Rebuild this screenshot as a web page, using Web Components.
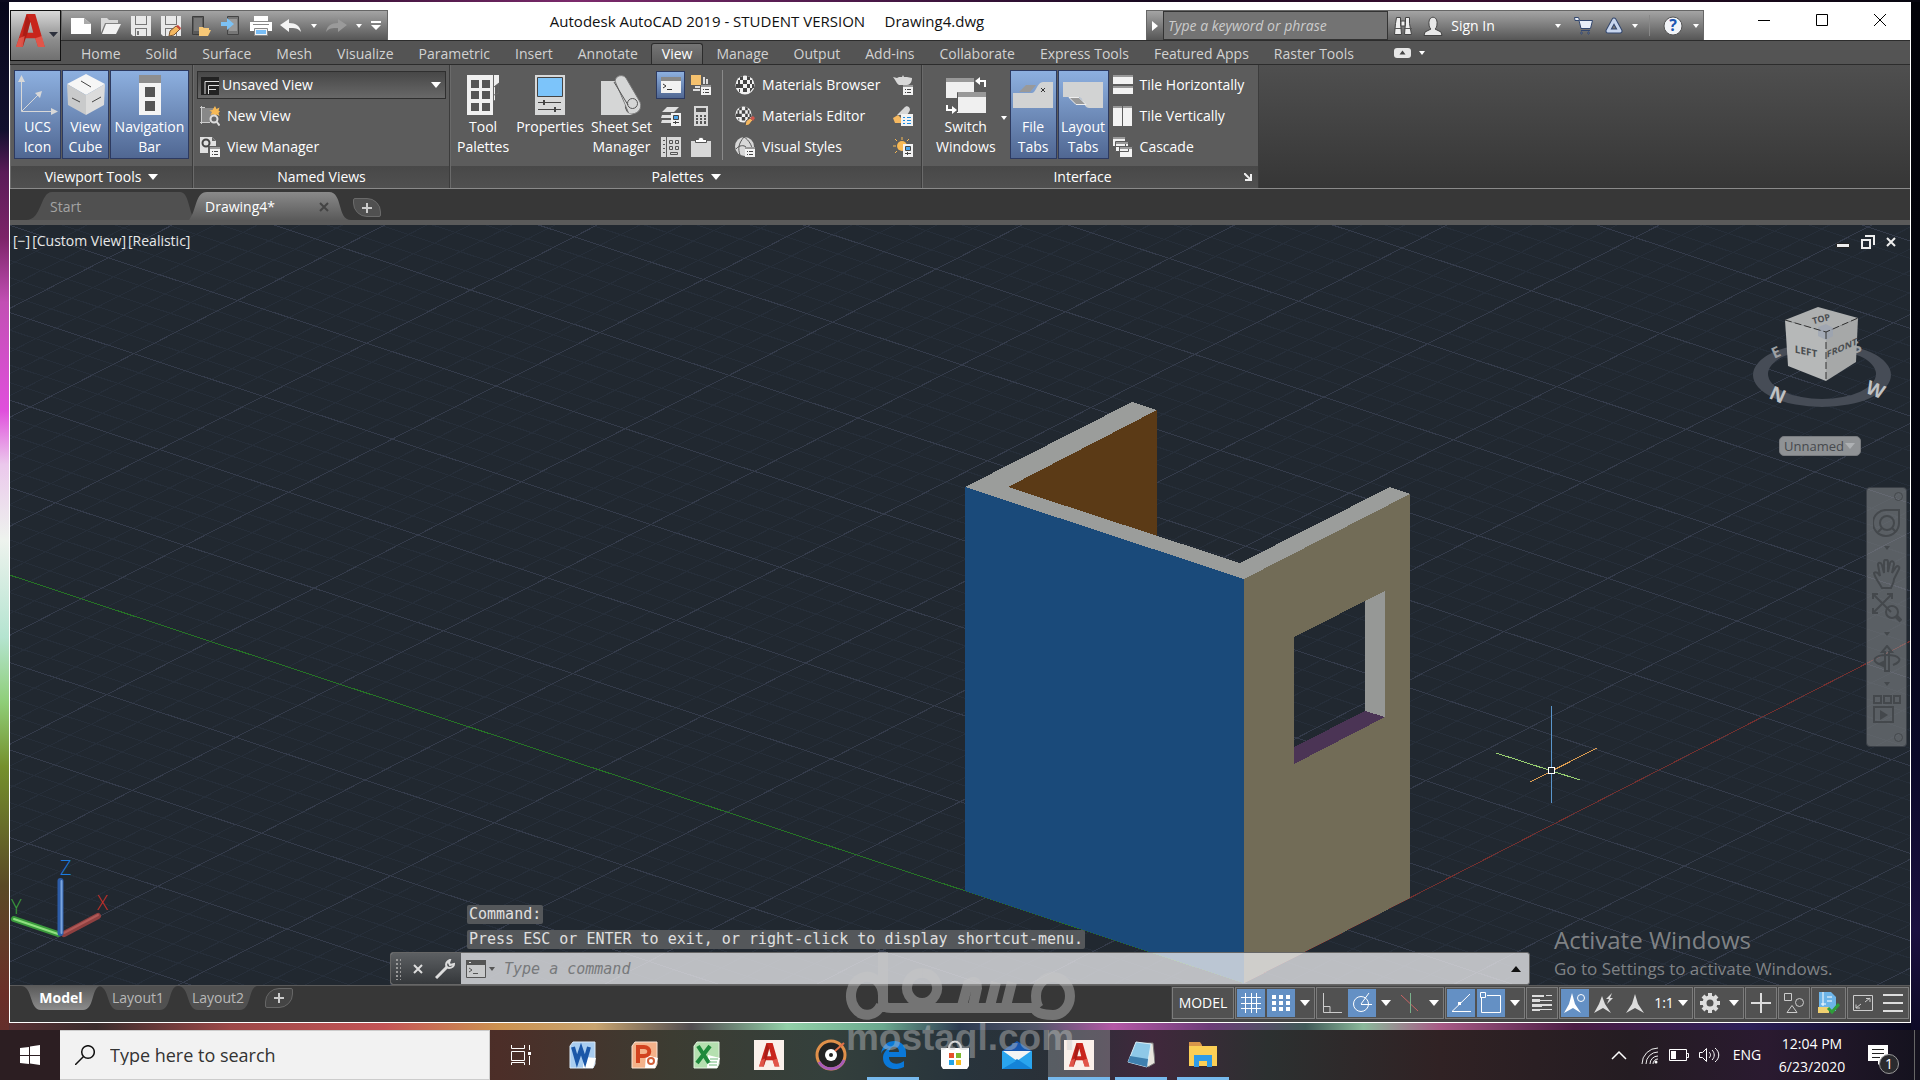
<!DOCTYPE html>
<html lang="en">
<head>
<meta charset="utf-8">
<title>Autodesk AutoCAD 2019</title>
<style>
  html, body { height: 100%; margin: 0; }
  body {
    font: 14px/20px "Open Sans", "Noto Sans", sans-serif;
    overflow: hidden;
  }
</style>
</head>
<body>
<desk-top>
  <cad-window></cad-window>
  <win-taskbar slot="taskbar"></win-taskbar>
</desk-top>

<script>
const base = /* css */ `
  :host { display: block; box-sizing: border-box; }
  * { box-sizing: border-box; margin: 0; }
  button, select, input { font: inherit; color: inherit; background: none; border: 0; padding: 0; outline: 0; }
  button { display: flex; align-items: center; justify-content: center; white-space: nowrap; }
  svg { display: block; }
`

// Most elements are only a template, so they share one factory
function define(name, css, html, setup) {
  const template = document.createElement("template")
  template.innerHTML = `<style>${base}${css}</style>${html}`
  customElements.define(name, class extends HTMLElement {
    constructor() {
      super()
      this.attachShadow({ mode: "open" }).append(template.content.cloneNode(true))
    }
    connectedCallback() {
      if (setup) setup(this, this.shadowRoot)
    }
  })
}

// name: [width, height, markup]
const listBadge = `<path fill="#f2f2f2" d="M10 10h10v10H10z"/><path fill="#999" d="M10 10h10v2H10z"/><path stroke="#444" d="M12 14.500h1M14 14.500h4M12 17.500h1M14 17.500h4"/>`
const propBadge = `<path fill="#f2f2f2" d="M10 7h10v13H10z"/><path fill="#4aa3e8" stroke="#444" d="M12.500 9.500h5v4h-5z"/><path stroke="#444" d="M12 16.500h6M14.500 15v3"/>`
const checker = `<circle cx="10" cy="10" r="9.500" fill="#f2f2f2"/><path fill="#444" d="M5 2l3-1v4H5zM12 1l3 1v3h-3zM8 5h4v4H8zM1 9h4v4H1zM3 5h2v4H3zM15 5h2v4h-2zM5 9h3v4H5zM12 9h3v4h-3zM8 13h4v4H8zM17 9h2v4h-2zM4 14h1v3H4zM15 13h3l-3 4z"/>`
const redA = `<path fill="#c8251c" d="M0 30L11 0h9l10 30h-7l-3-8H10l-3 8zM12 17h6L15 7z"/><path fill="#8e1510" d="M11 0l4 7-3 10-5 13-2 0z" opacity=".5"/><path fill="#ec6a5c" d="M0 30l3-8 6-2-2 10zM23 30l-3-8 7-2 3 10z" opacity=".7"/>`

const icons = {
  caret: [10, 6, `<path fill="currentColor" d="M0 0h10L5 6z"/>`],
  caretS: [6, 4, `<path fill="currentColor" d="M0 0h6L3 4z"/>`],
  logo: [43, 34, `<g transform="scale(.96 1.1)">${redA}</g><path fill="#2c303c" d="M33 18h9l-4.500 5z"/>`],
  fileNew: [20, 16, `<path fill="#fff" d="M0 0h13l7 6v10H0z"/><path fill="#aaa" d="M13 0v6h7z"/>`],
  fileOpen: [20, 16, `<path fill="#d8d8d8" d="M0 0h6l2 2h9v3H4L0 15z"/><path fill="#f2f2f2" d="M5 6h15l-5 10H1z"/>`],
  save: [20, 20, `<path fill="#e8e8e8" d="M0 0h20v20H2l-2-2z"/><path fill="#777" d="M4 0h1v8h10V0h1v9H4zM4 12h12v8h-1v-7H5v7H4z"/><path fill="#777" d="M6 15h2v4H6z"/>`],
  saveAs: [20, 20, `<path fill="#e8e8e8" d="M0 0h20v20H2l-2-2z"/><path fill="#777" d="M4 0h1v8h10V0h1v9H4zM4 12h12v8h-1v-7H5v7H4z"/><path fill="#f5b860" stroke="#7a5430" d="M8 20l1-5 6-5 4 3-6 6z"/><path fill="#c8443a" d="M15 10l2-1 3 3-1 2z"/>`],
  openWeb: [20, 20, `<path fill="#5a5a5a" stroke="#3c3c3c" d="M1.500.5h11v18h-11z"/><path fill="#777" d="M3 2h8v13H3z"/><path fill="#f7c877" d="M8 11h4l1 1h5v2h2l-3 6H8z"/>`],
  saveWeb: [20, 20, `<path fill="#777" stroke="#444" d="M6.500.5h11v18h-11z"/><path fill="#9a9a9a" d="M8 3h8v12H8z"/><path fill="#7cc2f5" d="M0 6h6V2l7 6-7 6v-4H0z"/>`],
  print: [22, 20, `<path fill="#fff" d="M4 0h14v5H4zM0 6h22v9H0z"/><path fill="#888" d="M3 8h16v1H3z"/><path fill="#f5f5f5" stroke="#888" d="M4.500 12.500h13v7h-13z"/><path fill="#78bdf5" d="M6 14h10v4H6z"/>`],
  undo: [22, 14, `<path fill="#f4f4f4" d="M0 6l9-6v4c7 0 11 3 12 9-3-4-6-4-12-4v4z"/>`],
  redo: [22, 14, `<path fill="#9a9a9a" d="M22 6l-9-6v4C6 4 2 7 1 13c3-4 6-4 12-4v4z"/>`],
  more: [10, 9, `<path fill="#fff" d="M0 0h10v2H0zM0 4h10L5 9z"/>`],
  play: [6, 10, `<path fill="#fff" d="M0 0l6 5-6 5z"/>`],
  binoculars: [20, 20, `<g fill="#eee" stroke="#444"><path d="M3.500 1.500h4v5l1 12h-7l1-11zM12.500 1.500h4v6l2 11h-7l1-12z"/><path d="M8 5h4v5H8z"/></g><path stroke="#555" d="M2 12.500h7M11 12.500h8"/>`],
  user: [20, 20, `<path fill="#e8e8e8" stroke="#444" d="M6 8c-1-9 9-9 8 0 0 3-1 4-2 5l6 3 1 3.500H1L2 16l6-3c-1-1-2-2-2-5z"/>`],
  cart: [20, 18, `<path fill="#e8eef8" stroke="#33476e" d="M.5.5h4l1 3h13l-2 8H7l-2-8H1zM7 15h1v2H7zM14 15h1v2h-1z"/><path stroke="#33476e" d="M7 13.500h9"/>`],
  a360: [20, 19, `<path fill="none" stroke="#33476e" stroke-width="5" stroke-linejoin="round" d="M10 4l6 11H4z"/><path fill="none" stroke="#c8d6ee" stroke-width="3" stroke-linejoin="round" d="M10 4l6 11H4z"/>`],
  help: [20, 20, `<circle cx="10" cy="10" r="9" fill="#f2f4f8" stroke="#555"/>`],
  winMin: [12, 12, `<path fill="#000" d="M0 6h12v1H0z"/>`],
  winMax: [12, 12, `<path fill="none" stroke="#000" d="M.5.5h11v11H.5z"/>`],
  winClose: [12, 12, `<path stroke="#000" d="M0 0l12 12M12 0L0 12"/>`],
  ribbonMin: [17, 10, `<rect width="17" height="10" rx="3" fill="#e6e6e6"/><path fill="#444" d="M8.500 2.500l3 4h-6z"/>`],
  ucs: [40, 40, `<g fill="none" stroke="#d8d8d8"><path d="M3.500 4v32.500H34M4 36l16-16"/></g><path fill="#d8d8d8" d="M3.500 0L7 7H0zM40 36.500l-7 3.500v-7zM24 16l-2 7-5-5z"/>`],
  cube: [40, 42, `<path fill="#f6f6f6" d="M20 0l19 10-19 11L1 10z"/><path fill="#c9cacb" d="M1 10l19 11v20L2 31z"/><path fill="#dcdcdc" d="M39 10L20 21v20l18-10z"/><path stroke="#444" d="M15 7l10 6M6 24l8 4M26 28l9-5"/>`],
  navBar: [22, 40, `<path fill="#8e8e8e" d="M0 0h22v8H0z"/><path fill="#f4f4f4" d="M0 8h22v32H0z"/><path fill="#555" d="M6 12h10v10H6zM6 26h10v10H6z"/>`],
  viewPic: [20, 20, `<path fill="#222" d="M1 1h18v18H1z"/><path fill="none" stroke="#ddd" d="M5 18V5.500h14M8.500 18V9.500H19M8 13.500h8"/>`],
  newView: [20, 20, `<path fill="#888" d="M2 2h12v14H2z"/><path fill="none" stroke="#ccc" d="M1.500 0v18M0 16.500h10M0 1.500h5"/><path fill="#f7b955" d="M15 0l1.500 3 3-1.500-1 3 1.500 1-1.500 1.500 1 3-3-1.500L15 11l-1.500-3-3 1 1.500-3L9.500 4.500l3-.500z"/><circle cx="14" cy="13" r="3.500" fill="#666" stroke="#ddd" stroke-width="2"/><path stroke="#ddd" stroke-width="2" d="M16.500 15.500l3 4"/>`],
  viewMgr: [20, 20, `<path fill="#e0e0e0" d="M0 0h12l4 4v5H8v7H0z"/><circle cx="6" cy="6" r="3.500" fill="none" stroke="#444" stroke-width="2"/><path fill="#666" d="M12 0v4h4z"/>${listBadge}`],
  toolPal: [32, 40, `<path fill="#f0f0f0" d="M0 0h32v8l-4 3v14l-2 1v14H0z"/><g fill="#555"><path d="M4 5h8v8H4zM15 5h8v8h-8zM4 16h8v8H4zM15 16h8v8h-8zM4 28h8v8H4zM15 28h8v8h-8z"/></g><path stroke="#666" fill="none" d="M26.500 0v26M27 12l5-4v10l-5 2"/>`],
  props: [30, 40, `<path fill="#d8d9d9" d="M0 0h30v40H0z"/><path fill="#7cc4fa" stroke="#444" d="M2.500 2.500h25v19h-25z"/><path fill="none" stroke="#444" d="M3 27.500h23M3 34.500h23"/><path stroke="#444" stroke-width="2" d="M9 25v5M20 32v5"/>`],
  sheetSet: [40, 40, `<path fill="#d5d6d6" d="M0 6h16l10 34H0z"/><path fill="#d5d6d6" stroke="#777" d="M14 6c1-6 8-7 11-3l14 24c3 7-3 13-11 12z"/><path fill="#d5d6d6" d="M0 40h32c-5-1-9-5-8-10L13 7H0z"/><circle cx="31.500" cy="28.500" r="5" fill="none" stroke="#555"/><path fill="none" stroke="#555" d="M13 7l14 23"/>`],
  cmd: [20, 16, `<path fill="#f2f2f2" d="M0 0h20v16H0z"/><path fill="#888" d="M0 0h20v4H0z"/><path fill="none" stroke="#333" d="M2 7l3 2-3 2M6 12.500h5"/>`],
  cmdDark: [20, 18, `<path fill="#c8c9ca" stroke="#555" d="M.5.5h19v17H.5z"/><path fill="#555" d="M0 0h20v5H0z"/><path fill="none" stroke="#555" d="M3 8l3 2-3 2M7 13.500h5"/><path stroke="#ddd" d="M3 2.500h2"/>`],
  design: [20, 20, `<path fill="#f5c16e" d="M0 0h10v10H0z"/><path fill="#ddd" d="M12 2h2v7h-2zM15 4h2v5h-2zM4 11h5v2H4zM2 14h7v2H2z"/>${listBadge}`],
  layers: [20, 20, `<path fill="#e0e0e0" d="M6 1h12l-5 5H1zM1 9h9v3H0zM1 14h9v3H0z"/>${propBadge}`],
  calc: [16, 20, `<path fill="#d8d8d8" d="M1 0h14v20H1z"/><path fill="#555" d="M3 2h10v4H3zM3 9h2v2H3zM7 9h2v2H7zM11 9h2v2h-2zM3 12h2v2H3zM7 12h2v2H7zM11 12h2v2h-2zM3 15h2v3H3zM7 15h2v3H7zM11 15h2v3h-2z"/>`],
  sheet: [20, 20, `<path fill="#d8d8d8" d="M0 0h5v20H0zM6 0h14v20H6z"/><path fill="none" stroke="#555" d="M8.500 3.500h3v3h-3zM14.500 3.500h3v3h-3zM8.500 9.500h3v3h-3zM14.500 9.500h3v3h-3zM9.500 15.500h7v2h-7z"/><path fill="#555" d="M2 3h2v1H2zM2 7h2v1H2zM2 11h2v1H2zM2 15h2v1H2z"/>`],
  clip: [20, 20, `<path fill="#d8d8d8" d="M0 4h20v16H0z"/><path fill="#fff" stroke="#555" d="M4.500 5.500V2.500h3c0-3 5-3 5 0h3v3z"/>`],
  matBrowser: [20, 20, checker],
  matEditor: [20, 20, `<g transform="scale(.85)">${checker}</g><path fill="#f5b860" stroke="#555" d="M10 20l1-5 4-3 3 2-4 5z"/><path fill="#d0574c" d="M15 12l3-2 2 2-2 3z"/>`],
  visual: [20, 20, `<circle cx="9.500" cy="9.500" r="9.500" fill="#d8d8d8"/><path fill="none" stroke="#555" d="M9 0C3 7 3 12 5 18M9 0c5 3 8 9 8 12M1 12c3-4 8-4 10-2"/>${listBadge}`],
  teapot: [20, 20, `<path fill="#d8d8d8" d="M0 2l4 1 2-1h3l1-2 1 2h3l5 1c0 4-2 7-5 7H6C4 9 3 6 0 2z"/>${listBadge}`],
  matAttach: [20, 20, `<path fill="#d8d8d8" d="M4 9l7-7c3-4 8 0 5 4l-2 3H8z"/><path fill="#f5b860" d="M0 12l5-3 5 5-2 3H2z"/><path fill="#f2f2f2" d="M8 8h12v12H8z"/><path fill="none" stroke="#1d8ce0" d="M10 11.500h2M14 11.500h4M10 14.500h2M14 14.500h4M10 17.500h2M14 17.500h4"/>`],
  sun: [20, 20, `<circle cx="9" cy="9" r="5" fill="#f7b955"/><path stroke="#f7b955" d="M9 0v3M2 2l2 2M0 9h3M2 16l2-2M16 2l-2 2"/>${propBadge}`],
  switchWin: [40, 40, `<path fill="#f0f0f0" d="M0 3h28v20H0zM11 18h29v20H11z"/><path fill="#999" d="M0 3h28v4H0zM11 17h29v5H11z"/><path fill="none" stroke="#555" d="M11.500 37V17.500"/><path fill="none" stroke="#fff" stroke-width="2" d="M32 6h7v6M1 30v5h7"/><path fill="#fff" d="M34 2v8l-5-4zM6 31v8l5-4z"/>`],
  fileTabs: [40, 26, `<path fill="#d2d3d3" d="M0 11h19c4 0 5-11 11-11h10v26H0z"/><path fill="#999" d="M6 10l7-7h10l-6 7z"/><path stroke="#333" d="M28 6l4 4M32 6l-4 4"/>`],
  layoutTabs: [40, 26, `<path fill="#d2d3d3" d="M0 0h40v26H26c-6 0-5-11-11-11H0z"/><path fill="#999" stroke="#eee" d="M6 15.500h10l7 7H13z"/>`],
  tileH: [20, 20, `<path fill="#f2f2f2" d="M0 0h20v9H0zM0 11h20v8H0z"/><path fill="#999" d="M0 0h20v2H0zM0 11h20v2H0z"/>`],
  tileV: [20, 20, `<path fill="#f2f2f2" d="M0 0h9v20H0zM10 0h9v20h-9z"/><path fill="#999" d="M0 0h9v2H0zM10 0h9v2h-9z"/>`],
  cascade: [20, 20, `<g stroke="#5b5b5b"><path fill="#f2f2f2" d="M-.5.5h13v9h-13zM2.500 4.500h13v10h-13zM6.500 9.500h13v11h-13z"/></g><path fill="#999" d="M0 0h12v2H0zM3 5h12v2H3zM7 10h12v2H7z"/>`],
  launcher: [8, 8, `<path fill="none" stroke="#eee" stroke-width="2" d="M0 0l6 6M7 1v6H1"/>`],
  x: [10, 10, `<path stroke="currentColor" stroke-width="2" d="M1 1l8 8M9 1L1 9"/>`],
  plus: [10, 10, `<path fill="currentColor" d="M4 0h2v4h4v2H6v4H4V6H0V4h4z"/>`],
  mdiMin: [14, 14, `<path fill="#eee" stroke="#222" d="M.5 8.500h13v4H.5z"/>`],
  mdiRestore: [14, 14, `<path fill="none" stroke="#eee" stroke-width="2" d="M4 1h9v9M1 5h8v8H1z"/>`],
  wrench: [20, 20, `<path fill="none" stroke="#ddd" stroke-width="3" d="M1 19L12 8"/><path fill="none" stroke="#ddd" stroke-width="2" d="M15 1c-5 2-5 7-1 8 3 0 5-2 5-4l-4 1-1-2z"/>`],
  grid: [20, 20, `<path fill="none" stroke="#fff" stroke-width="1" d="M4.500 0v20M10.500 0v20M15.500 0v20M0 4.500h20M0 10.500h20M0 15.500h20"/>`],
  snap: [20, 16, `<path fill="#fff" d="M1 0h4v4H1zM8 0h4v4H8zM15 0h4v4h-4zM1 6h4v4H1zM8 6h4v4H8zM15 6h4v4h-4zM1 12h4v4H1zM8 12h4v4H8zM15 12h4v4h-4z"/>`],
  ortho: [20, 20, `<path fill="none" stroke="#ccc" d="M1.500 0v19.500H20M2 13.500h6v6"/>`],
  polar: [20, 20, `<circle cx="9" cy="11" r="7.500" fill="none" stroke="#fff"/><path fill="none" stroke="#fff" d="M9 11.500h11M9 11l8-11"/>`],
  iso: [18, 20, `<path stroke="#c86464" d="M0 2l17 16"/><path stroke="#7ab08a" d="M9.500 0v20"/>`],
  track: [20, 20, `<path fill="none" stroke="#fff" stroke-width="1" d="M19 1L1 18.500h19"/><path fill="#fff" d="M7 9h3v3H7z"/>`],
  osnap: [22, 22, `<path fill="none" stroke="#fff" d="M1.500 6v14.500h19V3.500H7"/><path fill="#6490c4" stroke="#fff" d="M.5.5h5v5h-5z"/>`],
  weight: [20, 16, `<path fill="#ddd" d="M0 0h12v2H0zM14 0h6v1h-6zM0 4h8v3H0zM8 5h12v1H8zM0 9h10v3H0zM10 9h10v2H10zM0 14h8v2H0zM8 14h12v1H8z"/>`],
  annoVis: [22, 20, `<path fill="#fff" d="M8 0l3 11 6 9-8-5-9 5 5-9z"/><circle cx="17" cy="5" r="3.500" fill="none" stroke="#fff"/>`],
  annoAuto: [22, 20, `<path fill="#ddd" d="M8 3l3 8 6 9-8-5-9 5 5-9z"/><path fill="#ddd" d="M18 0l-6 6h3l-2 5 6-6h-3z"/>`],
  anno: [18, 20, `<path fill="#ddd" d="M9 1l3 10 6 9-9-5-9 5 6-9z"/>`],
  gear: [20, 20, `<circle cx="10" cy="10" r="5.500" fill="none" stroke="#ddd" stroke-width="4"/><path stroke="#ddd" stroke-width="4" d="M10 0v4M10 16v4M0 10h4M16 10h4M3 3l3 3M14 14l3 3M17 3l-3 3M6 14l-3 3"/>`],
  plusL: [20, 20, `<path fill="#ddd" d="M9 0h2v9h9v2h-9v9H9v-9H0V9h9z"/>`],
  isolate: [20, 20, `<g fill="none" stroke="#ccc"><path d="M.5.500h7v7h-7zM8 12.500l5 7H3z"/><circle cx="15.500" cy="9.500" r="4"/></g>`],
  perf: [22, 22, `<path fill="#6db4e8" d="M1 0h12l5 5v14H1z"/><path fill="#f0d070" d="M0 15h11v6H0z"/><path fill="none" stroke="#fff" d="M5 0v14M3 12h5M9 5h5M9 9h5"/><path fill="none" stroke="#2f9e3a" stroke-width="3" d="M10 16l4 4 7-8"/>`],
  clean: [20, 16, `<path fill="none" stroke="#ccc" d="M.5.500h19v15H.5zM3 13l5-4M3 9.500v3.500h4M17 3l-5 4M13 3.500h4V7"/>`],
  burger: [20, 18, `<path fill="#ddd" d="M0 0h20v2H0zM0 8h20v2H0zM0 16h20v2H0z"/>`],
  wheel: [28, 28, `<g fill="none" stroke="#44484c" stroke-width="2"><path d="M14 1h12v13A13 13 0 1 1 14 1z"/><circle cx="14" cy="14" r="7"/><path d="M9 19l-4 4M19 19l4 4"/></g>`],
  hand: [28, 30, `<path fill="none" stroke="#44484c" stroke-width="2" d="M9 29C5 22 2 19 1 14c2-2 4 0 6 3L5 6c0-3 3-3 4 0l2 8V3c0-3 4-3 4 0v10l2-9c1-3 4-2 4 1l-2 9 4-6c2-2 4 0 3 2l-5 10c0 4-2 6-3 9z"/>`],
  zoomExt: [30, 30, `<g fill="none" stroke="#44484c" stroke-width="2"><path d="M2 2l17 17M19 2L2 19M1 6V1h5M15 1h5v5M1 15v5h5"/><circle cx="20" cy="19" r="6"/></g><path stroke="#44484c" stroke-width="4" d="M24 23l5 5"/>`],
  orbit: [28, 28, `<g fill="none" stroke="#44484c" stroke-width="2"><path d="M14 1l5 6h-3v19h-4V7H9z"/><path d="M6 19c-8-3-5-9 8-9s17 6 6 10"/></g><path fill="#44484c" d="M4 19l8-4v8z"/>`],
  motion: [28, 28, `<g fill="none" stroke="#44484c" stroke-width="2"><path d="M1 1h7v7H1zM11 1h7v7h-7zM21 1h6v7h-6zM1 12h19v15H1z"/></g><path fill="#44484c" d="M7 15l8 5-8 5z"/>`],
  win: [20, 20, `<path fill="#fff" d="M0 3l9-1v8H0zM10 1.500L20 0v10H10zM0 11h9v8l-9-1zM10 11h10v9l-10-1.500z"/>`],
  search: [20, 20, `<circle cx="13" cy="7" r="6.300" fill="none" stroke="#111" stroke-width="1.500"/><path stroke="#111" stroke-width="1.500" d="M8.500 11.500L0 20"/>`],
  taskView: [20, 20, `<path fill="none" stroke="#fff" d="M.5 0v3.500h13V0M.5 6.500h13v9H.5zM.5 20v-2.500h13V20M18.500 0v5M18.500 11v9"/><path fill="#fff" d="M17 7h3v3h-3z"/>`],
  word: [28, 28, `<path fill="#a9cdf0" stroke="#dceaf8" d="M4 1h22v22l-2 4H1V5z"/><path fill="#fff" d="M15 16l12 1-3 10H14z"/><path fill="none" stroke="#1b57a8" stroke-width="4" d="M4 6l4 14 4-12 4 12 4-14"/>`],
  ppt: [28, 28, `<path fill="#f4b28a" stroke="#fbe4d4" d="M4 1h22v22l-2 4H1V5z"/><path fill="#fff" d="M15 14l12 3-3 10H14z"/><path fill="none" stroke="#d2431f" stroke-width="4" d="M7 22V6h6c7 0 7 9 0 9H8"/><circle cx="20" cy="20" r="3" fill="none" stroke="#d2603a" stroke-width="2"/>`],
  excel: [28, 28, `<path fill="#b5e0b0" stroke="#e2f4e0" d="M4 1h22v22l-2 4H1V5z"/><path fill="#fff" d="M15 14l12 3-3 10H14z"/><path stroke="#1f8a3c" stroke-width="4" d="M5 5l11 17M17 5L4 22"/><path stroke="#6cb878" d="M17 18h8M16 21h8M16 24h8"/>`],
  acad: [30, 30, `<path fill="#faf0ea" d="M0 0h30v30H0z"/><g transform="translate(5 3) scale(.68 .78)">${redA}</g>`],
  groove: [32, 32, `<circle cx="16" cy="16" r="14" fill="#222" stroke="#e0904a" stroke-width="3"/><path fill="none" stroke="#a65cb8" stroke-width="3" d="M4 23a14 14 0 0 0 25-2"/><circle cx="16" cy="16" r="6" fill="#fff"/><circle cx="16" cy="16" r="2" fill="#222"/><path stroke="#e0704a" stroke-width="2" d="M20 12l9-8"/>`],
  edge: [26, 28, `<path fill="#0a78d8" d="M1 13C2 4 8 0 14 0c8 0 12 6 12 12v4H9c0 8 10 8 15 4v6C14 31 3 27 3 17c0-5 3-8 6-10-5 1-7 3-8 6zm8-2h10c0-7-9-7-10 0z"/>`],
  store: [30, 30, `<path fill="none" stroke="#ddd" stroke-width="2" d="M9 9c0-10 12-10 12 0"/><path fill="#fff" d="M1 8h28v18l-2 3H3l-2-3z"/><path fill="#e5502a" d="M9 13h5v5H9z"/><path fill="#7cb82f" d="M16 13h5v5h-5z"/><path fill="#22a4e8" d="M9 20h5v5H9z"/><path fill="#f8b91c" d="M16 20h5v5h-5z"/>`],
  mail: [30, 28, `<path fill="#1858b0" d="M0 10L15 0l15 10z"/><path fill="#2aa5ee" d="M0 10h30v18H0z"/><path fill="#f4f4f4" d="M1 10h28L15 20z"/><path fill="#1484d8" d="M0 28l15-10 15 10z"/><path fill="#2aa5ee" d="M0 10l14 10L0 28z"/>`],
  notepad: [28, 28, `<path fill="#e8e4dc" stroke="#777" d="M11 2h15l2 20-7 4z"/><path fill="#8ec8e8" stroke="#d8ecf6" d="M9 1l15 2-4 23L1 21z"/><path fill="#3f7fae" d="M3 15l18 3-1 8L1 21z"/>`],
  explorer: [28, 26, `<path fill="#d8954a" d="M0 0h11l2 3v6H0z"/><path fill="#fbcf55" d="M0 4h28v20H0z"/><path fill="#2f9be6" d="M5 25V13h18v12h-5v-6h-8v6z"/>`],
  chevUp: [16, 10, `<path fill="none" stroke="#fff" stroke-width="1.500" d="M1 9l7-7 7 7"/>`],
  wifi: [17, 17, `<g fill="none" stroke="#eee"><path d="M1 17A16 16 0 0 1 17 1M5 17A12 12 0 0 1 17 5M9 17a8 8 0 0 1 8-8M12 17a5 5 0 0 1 5-5"/></g><circle cx="15" cy="15" r="1.500" fill="#fff"/>`],
  battery: [20, 12, `<path fill="none" stroke="#fff" d="M.5.500h17v11H.5zM18 4.500h1.500v4H18"/><path fill="#fff" d="M2 2h5v8H2z"/>`],
  volume: [21, 16, `<g fill="none" stroke="#fff"><path d="M.5 5.500h3l4-4v13l-4-4h-3zM10 5c2 2 2 4 0 6M13 3c3 3 3 7 0 10M16 1c5 4 5 10 0 14"/></g>`],
  notify: [22, 20, `<path fill="#fff" d="M0 0h20v16h-6l-4 4v-4H0z"/><path stroke="#222" d="M4 4.500h12M4 8.500h12M4 12.500h8"/>`]
}

class CadIcon extends HTMLElement {
  constructor() {
    super()
    this.attachShadow({ mode: "open" })
  }

  connectedCallback() {
    const [w, h, body] = icons[this.getAttribute("name")]
    this.shadowRoot.innerHTML = `<style>:host { display: inline-block; flex: none; } svg { display: block; }</style>
      <svg width="${w}" height="${h}" viewBox="0 0 ${w} ${h}" aria-hidden="true">${body}</svg>`
  }
}
customElements.define("cad-icon", CadIcon)

const icon = (name) => `<cad-icon name="${name}"></cad-icon>`
const iconButton = (name, label, cls = "") => `<button class="${cls}" aria-label="${label}">${icon(name)}</button>`

/* ---------- desktop ---------- */

define("desk-top", `
  :host {
    position: relative;
    display: grid;
    grid-template-rows: minmax(0, 1fr) 50px;
    height: 100vh;
    background:
      linear-gradient(90deg, #0b0a1e, #3a1238 18%, #7c2a6c 30%, #4a1848 45%, #16081e 60%, #3a0c30 75%, #06060f) top / 100% 2px no-repeat,
      linear-gradient(#07071a, #12102e 12%, #5a1b58 16%, #7c2468 22%, #c24fb4 28%, #e04fdc 38%, #ebc8ec 43%, #eef3ee 50%, #b4e4d0 59%, #8fce78 65%, #75902c 71%, #5a4a26 82%, #6b2e28 92%, #5a3030) left / 9px 100% no-repeat,
      linear-gradient(#020208, #04040f 50%, #0a0828 70%, #1c1040 86%, #07071a) right / 9px 100% no-repeat,
      linear-gradient(90deg, #5a3034, #3a2c2c 5%, #9c4848 12%, #c45456 20%, #cc9250 26%, #c8a470 31%, #504c50 36%, #92d0a8 41%, #6aa88e 46%, #2c3a50 50%, #52566a 54%, #b458a6 58%, #6c3c78 63%, #405a58 68%, #8ab89a 71%, #a85a86 75%, #4a1c44 82%, #2c2058 91%, #07071a);
  }
  main { min-height: 0; padding: 2px 9px 7px; }
  .watermark {
    position: absolute;
    left: 50%;
    bottom: 24px;
    width: 232px;
    margin-left: -116px;
    color: #c8c8c8;
    opacity: .42;
    font: bold 37px/36px "Liberation Sans", sans-serif;
    text-align: center;
    pointer-events: none;
  }
  .watermark svg { width: 100%; }
`, `
  <main><slot></slot></main>
  <slot name="taskbar"></slot>
  <div class="watermark">
    <svg width="232" height="72" viewBox="0 0 232 72">
      <path fill="none" stroke="currentColor" stroke-width="10" d="M39 54V4v50q0 6 8 6h144q1 7 18 7a17 19 0 1 0-17-19q0 8 3 12M39 48a16 19 0 1 0-2 9M78 25a15 15 0 1 0 .1 0M118 58l6-22q9-6 9 4l-4 18M146 58l6-24M162 58l6-24"/>
    </svg>
    mostaql.com
  </div>
`)

/* ---------- title bar ---------- */

define("cad-titlebar", `
  :host { position: relative; display: flex; align-items: flex-end; height: 38px; background: #fff; z-index: 1; }
  .app {
    position: absolute; left: 0; top: 8px;
    width: 51px; height: 51px;
    padding: 0 0 10px 3px;
    border: 1px solid #111;
    background: linear-gradient(#d8d8d8, #8c8c8c 60%, #707070);
  }
  .bar {
    display: flex;
    align-items: stretch;
    height: 30px;
    border: 1px solid #666;
    border-bottom: 0;
    background: linear-gradient(#a4a4a4, #565656);
    color: #fff;
  }
  .quick { margin-left: 51px; padding: 0 1px 0 4px; }
  .bar button { width: 30px; }
  .bar .thin { width: 15px; }
  .bar .last { width: 20px; }
  h1 { flex: 1; align-self: center; font: inherit; font-size: 15px; color: #111; text-align: center; white-space: pre; }
  .bar .go { width: 16px; }
  input { width: 225px; padding: 0 4px; border: 1px solid #333; background: #737373; font-style: italic; }
  input::placeholder { color: #ccc; opacity: 1; }
  .bar .sign { width: 50px; }
  .bar .wide { width: 71px; justify-content: flex-end; padding-right: 8px; }
  .bar .tight { width: 12px; }
  .sep { width: 1px; margin: 4px 8px; background: #888; }
  .help { position: relative; }
  .help b { position: absolute; inset: 0; font-size: 16px; line-height: 29px; text-align: center; color: #1d55b0; }
  .controls { display: flex; align-self: stretch; margin-left: 32px; }
  .controls button { width: 58px; padding: 0 2px 2px 0; }
`, `
  <button class="app" aria-label="Application menu">${icon("logo")}</button>
  <div class="bar quick">
    ${iconButton("fileNew", "New")}${iconButton("fileOpen", "Open")}${iconButton("save", "Save")}${iconButton("saveAs", "Save As")}
    ${iconButton("openWeb", "Open from Web")}${iconButton("saveWeb", "Save to Web")}${iconButton("print", "Plot")}
    ${iconButton("undo", "Undo")}${iconButton("caretS", "Undo list", "thin")}${iconButton("redo", "Redo")}${iconButton("caretS", "Redo list", "thin")}
    ${iconButton("more", "Customize", "last")}
  </div>
  <h1>Autodesk AutoCAD 2019 - STUDENT VERSION     Drawing4.dwg</h1>
  <div class="bar">
    ${iconButton("play", "Collapse", "go")}
    <input aria-label="Search" placeholder="Type a keyword or phrase">
    ${iconButton("binoculars", "Find")}${iconButton("user", "Account")}
    <button class="sign">Sign In</button>
    ${iconButton("caretS", "Account menu", "wide")}
    ${iconButton("cart", "App Store")}${iconButton("a360", "Connect")}${iconButton("caretS", "Connect menu", "tight")}
    <span class="sep"></span>
    <button class="help" aria-label="Help">${icon("help")}<b>?</b></button>
    ${iconButton("caretS", "Help menu", "thin")}
  </div>
  <div class="controls">
    ${iconButton("winMin", "Minimize")}${iconButton("winMax", "Maximize")}${iconButton("winClose", "Close")}
  </div>
`)

/* ---------- ribbon ---------- */

const tabNames = ["Home", "Solid", "Surface", "Mesh", "Visualize", "Parametric", "Insert", "Annotate", "View",
  "Manage", "Output", "Add-ins", "Collaborate", "Express Tools", "Featured Apps", "Raster Tools"]

define("ribbon-tabs", `
  :host { display: flex; align-items: stretch; height: 24px; padding-left: 59px; border-top: 1px solid #2c2c2c; background: #545454; color: #d2d2d2; }
  nav { display: flex; gap: 1px; }
  nav button { padding: 2px 12px 0; }
  nav .active {
    padding: 0 10px;
    margin-top: 2px;
    border: 1px solid #2c2c2c;
    border-bottom: 0;
    border-radius: 3px 3px 0 0;
    background: linear-gradient(#747474, #5c5c5c);
    color: #fff;
  }
  .tool { padding-left: 28px; }
  .tool + .tool { padding-left: 8px; color: #fff; }
`, `
  <nav>${tabNames.map((t) => `<button class="${t === "View" ? "active" : ""}">${t}</button>`).join("")}</nav>
  ${iconButton("ribbonMin", "Minimize ribbon", "tool")}${iconButton("caretS", "Ribbon options", "tool")}
`)

define("ribbon-panel", `
  :host {
    display: grid;
    grid-template-rows: 101px 22px;
    border-right: 1px solid #3c3c3c;
    border-left: 1px solid #6a6a6a;
    background: #5c5c5c;
    color: #fff;
  }
  .body { display: flex; align-items: flex-start; gap: 1px; padding: 5px 0 0 3px; }
  .title { position: relative; background: linear-gradient(#484848, #505050); color: #fff; gap: 7px; }
  .launch { position: absolute; right: 6px; top: 7px; display: flex; }
  :host([launcher]) .title { padding-right: 16px; }
`, `
  <div class="body"><slot></slot></div>
  <button class="title"><span></span></button>
`, (host, root) => {
  root.querySelector(".title span").textContent = host.getAttribute("label")
  if (host.hasAttribute("menu")) root.querySelector(".title").insertAdjacentHTML("beforeend", icon("caret"))
  if (host.hasAttribute("launcher")) root.querySelector(".title").insertAdjacentHTML("beforeend", `<span class="launch">${icon("launcher")}</span>`)
})

define("big-button", `
  button { flex-direction: column; justify-content: flex-start; height: 89px; padding: 3px 2px 0; border: 1px solid transparent; min-width: 100%; }
  :host([on]) button { border-color: #2d3a60; background: linear-gradient(#8db0e0, #506792); }
  .pic { display: flex; align-items: center; height: 42px; margin-bottom: 1px; }
  .text { text-align: center; white-space: pre; }
`, `<button><span class="pic"></span><span class="text"><slot></slot></span></button>`,
(host, root) => {
  root.querySelector(".pic").innerHTML = icon(host.getAttribute("icon"))
})

define("row-button", `
  button { gap: 7px; height: 28px; }
  .pic { display: flex; }
`, `<button><span class="pic"></span><slot></slot></button>`,
(host, root) => {
  root.querySelector(".pic").innerHTML = icon(host.getAttribute("icon"))
})

define("cad-ribbon", `
  :host { display: flex; height: 125px; border-top: 1px solid #2c2c2c; border-bottom: 1px solid #8a8a8a; background: linear-gradient(#4f4f4f, #363636); color: #fff; }
  .viewport { width: 183px; }
  .named { width: 257px; }
  .palettes { width: 472px; }
  .interface { width: 337px; }
  .w47 { width: 47px; }
  .w51 { width: 51px; }
  .w79 { width: 79px; }
  .push { margin-left: 7px; }
  .col { display: flex; flex-direction: column; gap: 3px; padding-top: 1px; }
  .list { padding-left: 3px; }
  .pick { position: relative; width: 249px; height: 28px; border: 1px solid #2f2f2f; background: linear-gradient(#474747, #686868); }
  .pick select { width: 100%; height: 100%; padding-left: 24px; appearance: none; }
  .pick cad-icon { position: absolute; top: 4px; left: 2px; pointer-events: none; }
  .pick cad-icon + cad-icon { left: auto; right: 4px; top: 10px; }
  .small { width: 29px; height: 28px; border: 1px solid transparent; }
  .small.on { border-color: #2d3a60; background: linear-gradient(#8db0e0, #506792); }
  .rule { width: 1px; height: 90px; margin: 0 11px 0 6px; background: #8a8a8a; }
  .more { align-self: center; width: 9px; height: 40px; }
`, `
  <ribbon-panel class="viewport" label="Viewport Tools" menu>
    <big-button class="w47" icon="ucs" on>UCS
Icon</big-button>
    <big-button class="w47" icon="cube" on>View
Cube</big-button>
    <big-button class="w79" icon="navBar" on>Navigation
Bar</big-button>
  </ribbon-panel>
  <ribbon-panel class="named" label="Named Views">
    <div class="col">
      <div class="pick"><select aria-label="Named view"><option>Unsaved View</option></select>${icon("viewPic")}${icon("caret")}</div>
      <row-button class="list" icon="newView">New View</row-button>
      <row-button class="list" icon="viewMgr">View Manager</row-button>
    </div>
  </ribbon-panel>
  <ribbon-panel class="palettes" label="Palettes" menu>
    <big-button icon="toolPal">Tool
Palettes</big-button>
    <big-button icon="props">Properties
 </big-button>
    <big-button icon="sheetSet">Sheet Set
Manager</big-button>
    <div class="col">${iconButton("cmd", "Command Line", "small on")}${iconButton("layers", "Layer Properties", "small")}${iconButton("sheet", "Markup Set Manager", "small")}</div>
    <div class="col">${iconButton("design", "DesignCenter", "small")}${iconButton("calc", "Quick Calculator", "small")}${iconButton("clip", "Clipboard", "small")}</div>
    <span class="rule"></span>
    <div class="col">
      <row-button icon="matBrowser">Materials Browser</row-button>
      <row-button icon="matEditor">Materials Editor</row-button>
      <row-button icon="visual">Visual Styles</row-button>
    </div>
    <div class="col push">${iconButton("teapot", "Render Settings", "small")}${iconButton("matAttach", "Material Attachments", "small")}${iconButton("sun", "Sun Properties", "small")}</div>
  </ribbon-panel>
  <ribbon-panel class="interface" label="Interface" launcher>
    <big-button class="push" icon="switchWin">Switch
Windows</big-button>
    ${iconButton("caretS", "Windows list", "more")}
    <big-button class="w47" icon="fileTabs" on>File
Tabs</big-button>
    <big-button class="w51" icon="layoutTabs" on>Layout
Tabs</big-button>
    <div class="col list">
      <row-button icon="tileH">Tile Horizontally</row-button>
      <row-button icon="tileV">Tile Vertically</row-button>
      <row-button icon="cascade">Cascade</row-button>
    </div>
  </ribbon-panel>
`)

/* ---------- file tabs ---------- */

define("file-tabs", `
  :host { display: flex; align-items: flex-end; height: 36px; padding-left: 16px; border-bottom: 5px solid #5a5a5a; background: #373737; color: #a4a4a4; }
  .tab { position: relative; width: 168px; height: 28px; padding: 2px 28px 0 24px; justify-content: space-between; }
  .tab + .tab { margin-left: -5px; padding-left: 16px; color: #fff; }
  .tab svg { position: absolute; inset: 0; }
  .tab span, .tab cad-icon { position: relative; }
  .tab cad-icon { color: #444; }
  .add { width: 28px; height: 19px; margin: 0 0 3px -4px; border: 1px solid #6a6a6a; border-radius: 2px 14px 2px 14px; background: #505050; color: #ccc; }
`, `
  <button class="tab"><svg width="168" height="28"><path fill="#505050" d="M0 28C16 28 14 0 26 0h128c8 0 8 14 14 28z"/></svg><span>Start</span></button>
  <button class="tab"><svg width="168" height="28"><defs><linearGradient id="g" x2="0" y2="1"><stop stop-color="#8a8a8a"/><stop offset="1" stop-color="#5a5a5a"/></linearGradient></defs><path fill="url(#g)" d="M0 28C8 18 6 0 18 0h122c14 0 8 28 22 28z"/></svg><span>Drawing4*</span>${icon("x")}</button>
  ${iconButton("plus", "New drawing", "add")}
`)

/* ---------- viewport ---------- */

// Drawing plane: one major cell along each axis, and where the axes meet
const origin = [1244, 983]
const stepY = [129.2, 42.7]
const stepX = [103.7, -53.2]

function gridLines() {
  let minor = ""
  let major = ""
  const line = (along, across, k) => {
    const x = origin[0] + across[0] * k / 5
    const y = origin[1] + across[1] * k / 5
    const d = `M${(x - along[0] * 20).toFixed(1)} ${(y - along[1] * 20).toFixed(1)}L${(x + along[0] * 20).toFixed(1)} ${(y + along[1] * 20).toFixed(1)}`
    if (k % 5) minor += d
    else major += d
  }
  for (let k = -70; k <= 70; k++) {
    line(stepY, stepX, k)
    line(stepX, stepY, k)
  }
  return `<path stroke="#262e39" d="${minor}"/><path stroke="#343b4a" d="${major}"/>`
}

define("model-scene", `
  :host { position: absolute; inset: 0; }
  svg { width: 100%; height: 100%; }
  text { font: 300 20px/20px "Open Sans", sans-serif; }
`, `
  <svg viewBox="10 225 1900 760" preserveAspectRatio="xMidYMid slice">
    <g fill="none" shape-rendering="crispEdges">
      ${gridLines()}
      <path stroke="#267326" d="M-48 556L1244 983"/>
      <path stroke="#73302f" d="M1244 983L2074 557"/>
    </g>
    <g shape-rendering="crispEdges">
      <path fill="#5b3a16" d="M1007 487l150-77v127z"/>
      <path fill="#9b9d9b" d="M965 487l167-85 25 8-149 77 232 76 150-76 20 7-166 85z"/>
      <path fill="#1a4a7a" d="M965 487l279 92v404l-279-92z"/>
      <path fill="#726c57" fill-rule="evenodd" d="M1244 579l166-85v404l-166 85zM1294 637v127l91-47V591z"/>
      <path fill="#969896" d="M1365 601l20-10v126l-20-6z"/>
      <path fill="#4b3455" d="M1294 747l71-36 20 6-91 47z"/>
    </g>
    <g fill="none" shape-rendering="crispEdges">
      <path stroke="#5a96cc" d="M1551.500 706v97"/>
      <path stroke="#98d070" d="M1496 753l84 27"/>
      <path stroke="#dc9c50" d="M1530 782l67-34"/>
      <path fill="#212830" stroke="#fff" d="M1548.500 767.500h6v6h-6z"/>
    </g>
    <g stroke-linecap="round" stroke-width="6">
      <path stroke="#8e4040" d="M64 934l34-18"/><path stroke="#b05a58" stroke-width="2" d="M64 933l34-18"/>
      <path stroke="#3a9a3c" d="M14 919l44 15"/><path stroke="#8fe080" stroke-width="2" d="M14 919l44 15"/>
      <path stroke="#2c5ca8" d="M60.500 881v52"/><path stroke="#7aa4dc" stroke-width="2" d="M61.500 881v52"/>
    </g>
    <text x="60" y="875" fill="#1c7ce0">Z</text>
    <text x="97" y="910" fill="#c83028">X</text>
    <text x="11" y="914" fill="#3ca03c">Y</text>
  </svg>
`)

define("view-cube", `
  :host { position: absolute; top: 78px; right: 17px; width: 144px; }
  .pick { position: relative; width: 82px; height: 20px; margin: 22px 0 0 30px; border: 1px solid #787b7f; border-radius: 5px; background: #8f9295; color: #46494d; font-size: 13px; line-height: 18px; }
  select { display: block; width: 100%; height: 18px; padding-left: 4px; appearance: none; }
  .pick cad-icon { position: absolute; right: 5px; top: 6px; color: #aeb1b4; }
  svg text { font-family: "Open Sans", sans-serif; font-weight: 700; text-anchor: middle; }
`, `
  <svg width="144" height="111" viewBox="0 0 144 111">
    <path fill="#464c56" fill-rule="evenodd" d="M4 72a69 32 0 1 1 138 0 69 32 0 1 1-138 0zM19 71a54 25 0 1 0 108 0 54 25 0 1 0-108 0z"/>
    <g fill="#9da0a4" font-size="15"><text transform="translate(29 54) rotate(-24)">E</text><text transform="translate(110 49) rotate(-24)">S</text></g>
    <path fill="#aeb0b0" d="M36 17L69 4l40 11-32 14z"/>
    <path fill="#b6b8b8" d="M36 17l41 12v49L39 63z"/>
    <path fill="#a6a8a8" d="M77 29l32-14-2 44-30 19z"/>
    <path fill="#98a2b4" opacity=".6" d="M69 24l8-3 7 4v8l-7 4-8-4z"/>
    <path fill="none" stroke="#333" stroke-dasharray="7 3" d="M36 17l41 12 32-14M77 29v49"/>
    <g fill="#4a4d50">
      <text transform="translate(57 52) skewY(12)" font-size="10">LEFT</text>
      <text transform="translate(93 48) skewY(-24)" font-size="9">FRONT</text>
      <text transform="translate(73 19) rotate(-14)" font-size="9">TOP</text>
    </g>
    <g fill="#c0c2c4" font-size="19">
      <text transform="translate(26 98) rotate(24)">N</text>
      <text transform="translate(124 93) rotate(22)">W</text>
    </g>
  </svg>
  <div class="pick"><select aria-label="Coordinate system"><option>Unnamed</option></select>${icon("caret")}</div>
`)

define("nav-bar", `
  :host { position: absolute; top: 262px; right: 3px; display: flex; flex-direction: column; align-items: center; width: 41px; height: 260px; padding: 4px 0; border: 1px solid #3a3f46; border-radius: 4px; background: rgba(148, 150, 152, .5); color: #44484c; }
  .dot { align-self: flex-end; width: 9px; height: 9px; margin-right: 3px; border: 1px solid #44484c; border-radius: 50%; }
  .gap { margin-top: 8px; }
  .near { margin-top: 4px; }
  .drop { height: 22px; }
  .end { margin-top: auto; }
`, `
  <button class="dot" aria-label="Close"></button>
  ${iconButton("wheel", "Steering wheel", "gap")}${iconButton("caretS", "Wheel menu", "drop")}
  ${iconButton("hand", "Pan")}${iconButton("zoomExt", "Zoom extents", "near")}${iconButton("caretS", "Zoom menu", "drop")}
  ${iconButton("orbit", "Orbit")}${iconButton("caretS", "Orbit menu", "drop")}
  ${iconButton("motion", "ShowMotion")}
  <button class="dot end" aria-label="Customize"></button>
`)

define("command-line", `
  :host { position: absolute; left: 380px; right: 380px; bottom: 0; font: 15px/19px "DejaVu Sans Mono", "Liberation Mono", monospace; }
  p { width: fit-content; margin: 0 0 6px 77px; padding: 0 2px; border-radius: 2px; background: #54575a; color: #e0e0e0; }
  p:first-child { background: #4a4d50; color: #aaa; }
  .bar { display: flex; align-items: center; height: 33px; margin-top: -3px; border: 1px solid #666; border-radius: 3px; background: rgba(236, 236, 238, .77); color: #555; overflow: hidden; }
  .grip { display: flex; align-items: center; justify-content: space-between; align-self: stretch; width: 70px; padding: 0 6px 0 4px; background: linear-gradient(#5c5f62, #35383b); color: #ddd; }
  .dots { width: 6px; height: 22px; background: radial-gradient(circle, #999 1px, transparent 1px) 0 0 / 4px 4px; }
  .drop { gap: 3px; padding: 0 9px 0 5px; }
  input { flex: 1; padding-top: 2px; color: #333; font-style: italic; }
  input::placeholder { color: #77797b; opacity: 1; }
  .up { width: 26px; color: #111; transform: rotate(180deg); }
`, `
  <p>Command:</p>
  <p>Press ESC or ENTER to exit, or right-click to display shortcut-menu.</p>
  <div class="bar">
    <div class="grip"><span class="dots"></span>${iconButton("x", "Close")}${iconButton("wrench", "Customize")}</div>
    <button class="drop" aria-label="Recent commands">${icon("cmdDark")}${icon("caretS")}</button>
    <input aria-label="Command" placeholder="Type a command">
    ${iconButton("caret", "History", "up")}
  </div>
`)

define("cad-viewport", `
  :host { position: relative; min-height: 0; flex: 1; overflow: hidden; background: #212830; }
  .label { position: absolute; left: 3px; top: 6px; display: flex; gap: 2px; color: #e8e8e8; }
  .mdi { position: absolute; right: 14px; top: 10px; display: flex; gap: 11px; color: #eee; }
  .activate { position: absolute; right: 72px; bottom: 4px; width: 284px; color: rgba(176, 176, 176, .68); font-size: 17px; line-height: 24px; white-space: nowrap; }
  .activate strong { display: block; font-weight: 400; font-size: 24px; line-height: 34px; }
`, `
  <model-scene></model-scene>
  <div class="label"><button>[−]</button><button>[Custom View]</button><button>[Realistic]</button></div>
  <div class="mdi">${iconButton("mdiMin", "Minimize drawing")}${iconButton("mdiRestore", "Restore drawing")}${iconButton("x", "Close drawing")}</div>
  <view-cube></view-cube>
  <nav-bar></nav-bar>
  <div class="activate"><strong>Activate Windows</strong>Go to Settings to activate Windows.</div>
  <command-line></command-line>
`)

/* ---------- layout tabs and status bar ---------- */

define("layout-tabs", `
  :host { display: flex; padding-left: 11px; color: #b8b8b8; }
  .tab { width: 80px; height: 24px; clip-path: path("M0 0C12 0 8 24 20 24H62C74 24 70 0 80 0Z"); background: #505050; }
  .tab.on { background: linear-gradient(#5a5a5a, #8c8c8c); color: #fff; font-weight: 700; }
  .tab.on + .tab { margin-left: -3px; }
  .add { width: 28px; height: 20px; margin: 2px 0 0 7px; border: 1px solid #666; border-radius: 14px 2px 14px 2px; background: #444; color: #ccc; }
`, `
  <button class="tab on">Model</button><button class="tab">Layout1</button><button class="tab">Layout2</button>
  ${iconButton("plus", "New layout", "add")}
`)

define("status-bar", `
  :host { display: flex; gap: 1px; padding: 1px 1px 3px; background: #454545; color: #fff; }
  div { display: flex; border: 1px solid #7c7c7c; background: #515151; }
  button { width: 30px; border: 1px solid #515151; }
  .on { background: #6490c4; }
  .drop { width: 18px; }
  .model { width: 60px; }
  .scale { width: 42px; gap: 4px; }
  .perf { width: 33px; }
`, `
  <div><button class="model">MODEL</button></div>
  <div>${iconButton("grid", "Grid", "on")}${iconButton("snap", "Snap", "on")}${iconButton("caret", "Snap menu", "drop")}</div>
  <div>${iconButton("ortho", "Ortho")}${iconButton("polar", "Polar tracking", "on")}${iconButton("caret", "Polar menu", "drop")}${iconButton("iso", "Isometric drafting")}${iconButton("caret", "Isometric menu", "drop")}</div>
  <div>${iconButton("track", "Object snap tracking", "on")}${iconButton("osnap", "Object snap", "on")}${iconButton("caret", "Object snap menu", "drop")}</div>
  <div>${iconButton("weight", "Lineweight")}</div>
  <div>${iconButton("annoVis", "Annotation visibility", "on")}${iconButton("annoAuto", "Auto scale")}${iconButton("anno", "Annotation scale")}<button class="scale">1:1${icon("caret")}</button></div>
  <div>${iconButton("gear", "Workspace")}${iconButton("caret", "Workspace menu", "drop")}</div>
  <div>${iconButton("plusL", "Annotation monitor")}</div>
  <div>${iconButton("isolate", "Isolate objects")}</div>
  <div>${iconButton("perf", "Graphics performance", "perf")}</div>
  <div>${iconButton("clean", "Clean screen")}${iconButton("burger", "Customization")}</div>
`)

define("cad-window", `
  :host { display: flex; flex-direction: column; height: 100%; border: 1px solid #fff; border-top: 0; background: #373737; }
  footer { display: flex; justify-content: space-between; height: 37px; border-top: 1px solid #5a5a5a; background: #373737; }
`, `
  <cad-titlebar></cad-titlebar>
  <ribbon-tabs></ribbon-tabs>
  <cad-ribbon></cad-ribbon>
  <file-tabs></file-tabs>
  <cad-viewport></cad-viewport>
  <footer><layout-tabs></layout-tabs><status-bar></status-bar></footer>
`)

/* ---------- taskbar ---------- */

define("win-taskbar", `
  :host {
    display: flex;
    color: #fff;
    background: linear-gradient(90deg, #2c1e22, #4c2e28 26%, #3c3c32 35%, #34403c 43%, #28343c 50%, #2a3038 55%, #40283c 60%, #2c3030 66%, #302224 75%, #241c22 85%, #2a1a30 92%, #14121e);
  }
  .start { width: 60px; background: #2c1e22; }
  label { display: flex; align-items: center; gap: 15px; width: 430px; padding-left: 15px; border: 1px solid #ccc; border-left: 0; background: #f2f2f2; }
  input { flex: 1; min-width: 0; color: #222; font-size: 18px; }
  input::placeholder { color: #333; opacity: 1; }
  .app { position: relative; width: 62px; border-bottom: 3px solid transparent; padding-top: 3px; }
  .run::after { content: ""; position: absolute; left: 5px; right: 5px; bottom: -3px; height: 3px; background: #76b9ed; }
  .active { background: rgba(255, 255, 255, .22); }
  .active::after { left: 0; right: 0; }
  .tray { display: flex; align-items: center; margin-left: auto; }
  .tray button { width: 30px; height: 50px; }
  .tray .lang { width: 46px; }
  .tray .clock { width: 84px; flex-direction: column; line-height: 23px; }
  .tray .note { position: relative; width: 60px; padding-right: 10px; }
  .note span { position: absolute; right: 15px; top: 24px; width: 20px; height: 20px; border: 1px solid #999; border-radius: 50%; background: #2a2a2e; line-height: 18px; text-align: center; }
  .peek { width: 1px; height: 50px; margin-right: 5px; background: #666; }
`, `
  ${iconButton("win", "Start", "start")}
  <label>${icon("search")}<input aria-label="Search" placeholder="Type here to search"></label>
  ${iconButton("taskView", "Task View", "app")}${iconButton("word", "Word", "app")}${iconButton("ppt", "PowerPoint", "app")}${iconButton("excel", "Excel", "app")}
  ${iconButton("acad", "AutoCAD", "app")}${iconButton("groove", "Groove Music", "app")}${iconButton("edge", "Edge", "app run")}${iconButton("store", "Store", "app")}
  ${iconButton("mail", "Mail", "app")}${iconButton("acad", "AutoCAD 2019", "app run active")}${iconButton("notepad", "Notepad", "app run")}${iconButton("explorer", "File Explorer", "app run")}
  <div class="tray">
    ${iconButton("chevUp", "Hidden icons")}${iconButton("wifi", "Network")}${iconButton("battery", "Battery")}${iconButton("volume", "Volume")}
    <button class="lang">ENG</button>
    <button class="clock"><span>12:04 PM</span><span>6/23/2020</span></button>
    <button class="note" aria-label="Notifications">${icon("notify")}<span>1</span></button>
    <i class="peek"></i>
  </div>
`)
</script>
</body>
</html>
